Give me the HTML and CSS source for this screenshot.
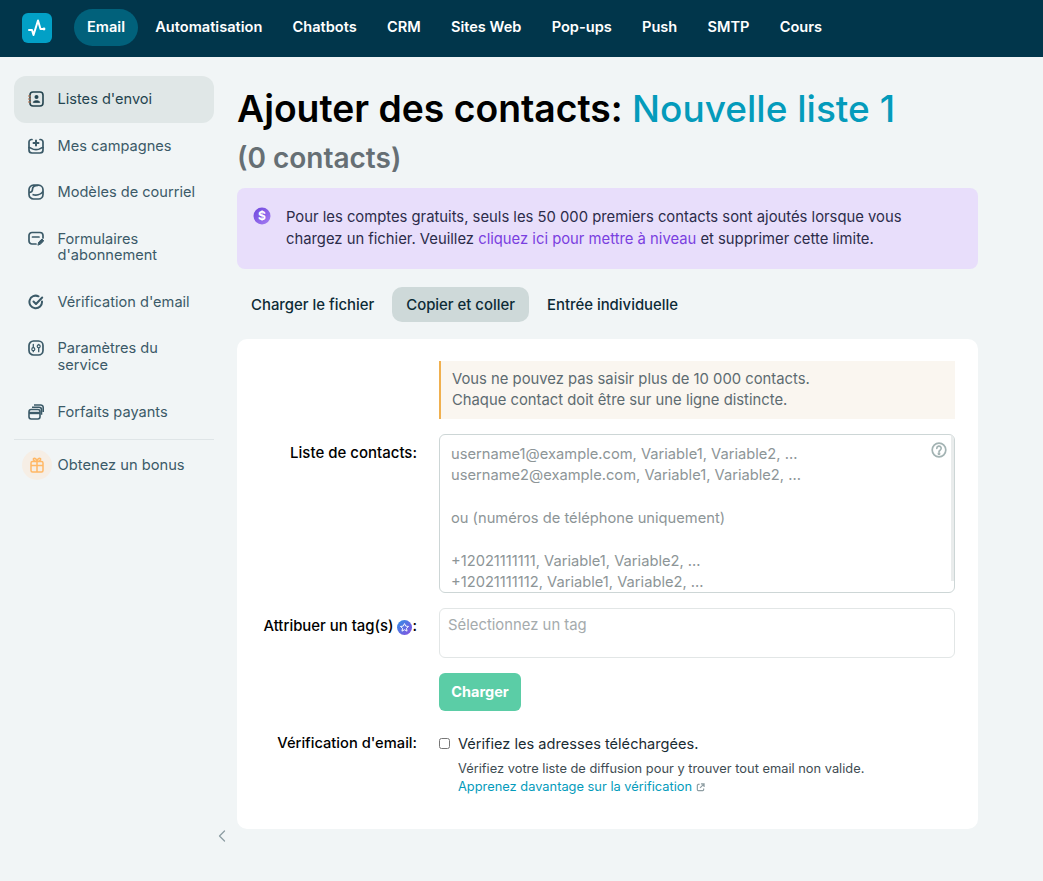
FILE: index.html
```html
<!DOCTYPE html>
<html lang="fr">
<head>
<meta charset="utf-8">
<title>Ajouter des contacts</title>
<link rel="stylesheet" href="styles.css">
</head>
<body>
<header class="topbar">
  <a class="logo"><svg width="18" height="18" viewBox="0 0 18 18" fill="none" stroke="#fff" stroke-width="2" stroke-linecap="round" stroke-linejoin="round"><path d="M1 11H4L5.500 16 10 1.500 12.500 10H16"/><circle cx="16" cy="10" r="1.400" fill="#fff" stroke="none"/></svg></a>
  <nav class="topnav">
    <a class="topnav-item is-active">Email</a>
    <a class="topnav-item">Automatisation</a>
    <a class="topnav-item">Chatbots</a>
    <a class="topnav-item">CRM</a>
    <a class="topnav-item">Sites Web</a>
    <a class="topnav-item">Pop-ups</a>
    <a class="topnav-item">Push</a>
    <a class="topnav-item">SMTP</a>
    <a class="topnav-item">Cours</a>
  </nav>
</header>
<div class="layout">
  <aside class="sidebar">
    <a class="side-item is-active">
      <svg class="side-icon" viewBox="0 0 16 16" fill="none" stroke="currentColor" stroke-width="1.600"><rect x="2" y="1" width="13" height="14" rx="3"/><circle cx="8.500" cy="6" r="2" fill="currentColor" stroke="none"/><path d="M5.300 11.300c.6-2 5.800-2 6.400 0z" fill="currentColor" stroke-width="1"/><path d="M0 5h3M0 8h3M0 11h3" stroke="#b9704a" stroke-width="1.200"/></svg>
      <span>Listes d'envoi</span>
    </a>
    <a class="side-item">
      <svg class="side-icon" viewBox="0 0 16 16" fill="none" stroke="currentColor" stroke-width="1.700" stroke-linecap="round"><path d="M4 1.500H3.500a2.500 2.500 0 0 0-2.500 2.500v8a3 3 0 0 0 3 3h8a3 3 0 0 0 3-3V4a2.500 2.500 0 0 0-2.500-2.500H12"/><path d="M1 9.500c2.500 0 2.500 2.200 7 2.200s4.500-2.200 7-2.200"/><path d="M8 2.500v5M5.500 5h5" stroke-width="2"/></svg>
      <span>Mes campagnes</span>
    </a>
    <a class="side-item">
      <svg class="side-icon" viewBox="0 0 16 16" fill="none" stroke="currentColor" stroke-width="1.700"><rect x="1" y="1.200" width="14" height="13.800" rx="4.500"/><path d="M1 8.500c2.500 0 3.500-.8 3.500-3.200C4.500 3.300 6.500 1.500 10 1.500"/><path d="M4.500 10.500c3.500 1.200 8 .5 10.500-3"/></svg>
      <span>Modèles de courriel</span>
    </a>
    <a class="side-item">
      <svg class="side-icon" viewBox="0 0 16 16" fill="none" stroke="currentColor" stroke-width="1.700" stroke-linecap="round"><path d="M8 13H4a3 3 0 0 1-3-3V4.500a3 3 0 0 1 3-3h8a3 3 0 0 1 3 3V7"/><path d="M4.500 6h6.500"/><path d="M10 13.800l.8-2.800 3.200-3 1.800 1.800-3 3z" fill="currentColor" stroke-width="1"/></svg>
      <span>Formulaires d'abonnement</span>
    </a>
    <a class="side-item">
      <svg class="side-icon" viewBox="0 0 16 16" fill="none" stroke="currentColor" stroke-width="2" stroke-linecap="round" stroke-linejoin="round"><path d="M14 7.500A6.300 6.300 0 1 1 10.500 2.300"/><path d="M5.500 7.500 8 10l6.200-6.500"/></svg>
      <span>Vérification d'email</span>
    </a>
    <a class="side-item">
      <svg class="side-icon" viewBox="0 0 16 16" fill="none" stroke="currentColor" stroke-width="1.700" stroke-linecap="round"><rect x="1" y="1" width="14" height="14" rx="4.500"/><path d="M5.300 4.300v7.400M10.700 4.300v7.400" stroke-width="1.300"/><circle cx="5.300" cy="9.200" r="1.500" fill="#f1f5f6" stroke-width="1.200"/><circle cx="10.700" cy="6.300" r="1.500" fill="#f1f5f6" stroke-width="1.200"/></svg>
      <span>Paramètres du service</span>
    </a>
    <a class="side-item">
      <svg class="side-icon" viewBox="0 0 16 16" fill="none" stroke="currentColor" stroke-width="1.600"><rect x="1" y="5.500" width="11" height="9.500" rx="2.200"/><path d="M1 9h11" stroke-width="2.400"/><path d="M4 3.300h7a2.500 2.500 0 0 1 2.500 2.500v5"/><path d="M6 1h6.500A2.500 2.500 0 0 1 15.200 3.500V8"/></svg>
      <span>Forfaits payants</span>
    </a>
    <hr class="side-rule">
    <a class="side-bonus">
      <span class="bonus-badge"><svg width="14" height="16" viewBox="0 0 14 16" fill="none" stroke="#ffb866" stroke-width="1.500" stroke-linejoin="round"><rect x="1" y="4.500" width="12" height="10.500" rx="1.500"/><path d="M1 8.500h12M7 4.500V15M7 4.500C5 4.500 3 3.500 3.500 1.500 5 .5 7 2.500 7 4.500ZM7 4.500c2 0 4-1 3.500-3C9 .5 7 2.500 7 4.500Z"/></svg></span>
      <span>Obtenez un bonus</span>
    </a>
  </aside>
  <main class="main">
    <h1 class="title">Ajouter des contacts: <span class="title-accent">Nouvelle liste 1</span></h1>
    <p class="subtitle">(0 contacts)</p>
    <div class="promo">
      <svg class="promo-icon" width="18" height="18" viewBox="0 0 18 18"><defs><linearGradient id="pg" x1="0" y1="0" x2="1" y2="1"><stop offset="0" stop-color="#6d45dd"/><stop offset="1" stop-color="#a67ff2"/></linearGradient></defs><circle cx="9" cy="9" r="8.500" fill="url(#pg)"/><text x="9" y="13" text-anchor="middle" class="promo-dollar">$</text></svg>
      <p>Pour les comptes gratuits, seuls les 50 000 premiers contacts sont ajoutés lorsque vous chargez un fichier. Veuillez <a class="promo-link">cliquez ici pour mettre à niveau</a> et supprimer cette limite.</p>
    </div>
    <div class="tabs">
      <a class="tab">Charger le fichier</a>
      <a class="tab is-active">Copier et coller</a>
      <a class="tab">Entrée individuelle</a>
    </div>
    <section class="card">
      <div class="form-grid">
        <div></div>
        <div class="notice">Vous ne pouvez pas saisir plus de 10 000 contacts.<br>Chaque contact doit être sur une ligne distincte.</div>

        <div class="label label-contacts">Liste de contacts:</div>
        <div class="textarea">
          <div class="placeholder">username1@example.com, Variable1, Variable2, ...<br>username2@example.com, Variable1, Variable2, ...<br><br>ou (numéros de téléphone uniquement)<br><br>+12021111111, Variable1, Variable2, ...<br>+12021111112, Variable1, Variable2, ...</div>
          <svg class="help" width="16" height="16" viewBox="0 0 16 16" fill="none" stroke="#a3b3b3" stroke-width="1.700"><circle cx="8" cy="8" r="6.800"/><path d="M5.800 6.300a2.200 2.200 0 1 1 3.300 1.900c-.7.400-1.100.8-1.100 1.500" stroke-linecap="round"/><circle cx="8" cy="11.800" r=".6" fill="#a3b3b3"/></svg>
          <span class="scrollbar"></span>
        </div>

        <div class="label label-tag">Attribuer un tag(s)<svg class="star-badge" width="15" height="15" viewBox="0 0 16 16"><defs><linearGradient id="sb" x1="0" y1="0" x2="1" y2="1"><stop offset="0" stop-color="#2f8fe6"/><stop offset="1" stop-color="#8a4fe0"/></linearGradient></defs><circle cx="8" cy="8" r="8" fill="url(#sb)"/><path d="M8 3.800l1.300 2.700 3 .4-2.200 2 .6 3L8 10.400l-2.700 1.500.6-3-2.200-2 3-.4z" fill="none" stroke="#fff" stroke-width="1"/></svg>:</div>
        <div class="tag-input">Sélectionnez un tag</div>

        <div></div>
        <div><button class="submit" type="button">Charger</button></div>

        <div class="label label-verify">Vérification d'email:</div>
        <div class="verify">
          <label class="check-row"><input class="check" type="checkbox"><span>Vérifiez les adresses téléchargées.</span></label>
          <p class="hint">Vérifiez votre liste de diffusion pour y trouver tout email non valide.<br><a class="hint-link">Apprenez davantage sur la vérification <svg class="ext" width="9" height="9" viewBox="0 0 10 10" fill="none" stroke="#8f9ea3" stroke-width="1.300"><path d="M4 1.500H2.500a1.500 1.500 0 0 0-1 1v5a1 1 0 0 0 1 1h5a1 1 0 0 0 1-1V6"/><path d="M5.500 1h3.500v3.500M9 1 4.500 5.500"/></svg></a></p>
        </div>
      </div>
    </section>
  </main>
</div>
<svg class="collapse" width="8" height="12" viewBox="0 0 8 12" fill="none" stroke="#8d9da3" stroke-width="1.300" stroke-linecap="round" stroke-linejoin="round"><path d="M6.500 1 1.500 6l5 5"/></svg>
</body>
</html>
```
FILE: styles.css
```css
* { box-sizing: border-box; }
html, body { margin: 0; padding: 0; }
body {
  position: relative;
  min-height: 881px;
  background: #f1f5f6;
  font-family: Inter, "Noto Sans", sans-serif;
  color: #0d2b36;
  overflow: hidden;
}
p { margin: 0; }

.topbar {
  height: 57px;
  background: #01364b;
  display: flex;
  align-items: center;
  padding: 0 0 2px 22px;
}
.logo {
  width: 30px;
  height: 30px;
  border-radius: 6px;
  background: #02a0c6;
  display: flex;
  align-items: center;
  justify-content: center;
  margin-right: 22px;
}
.topnav { display: flex; align-items: center; gap: 4.200px; }
.topnav-item {
  color: #fff;
  font-size: 14.600px;
  font-weight: 600;
  padding: 0 13px;
  height: 37px;
  line-height: 37px;
  border-radius: 19px;
}
.topnav-item.is-active { background: #01617b; }

.layout {
  display: flex;
  align-items: flex-start;
  padding: 19px 0 0 14px;
  gap: 23px;
}
.sidebar { width: 200px; flex: none; display: flex; flex-direction: column; }
.side-item {
  display: flex;
  align-items: flex-start;
  gap: 13.500px;
  padding: 15px 14px 15.100px;
  border-radius: 12px;
  font-size: 14.600px;
  line-height: 16.500px;
  color: #3b5a68;
}
.side-item.is-active { background: #e0e7e7; color: #24444f; }
.side-icon { width: 16px; height: 16px; flex: none; }
.side-rule { border: 0; border-top: 1px solid #dfe5e7; margin: 4px 0 10px; width: 100%; }
.side-bonus {
  display: flex;
  align-items: center;
  gap: 5.500px;
  padding-left: 8px;
  font-size: 14.700px;
  color: #3b5a68;
}
.bonus-badge {
  width: 30px;
  height: 30px;
  border-radius: 50%;
  background: #f6eee5;
  display: flex;
  align-items: center;
  justify-content: center;
}

.main { width: 741px; flex: none; }
.title {
  margin: 11px 0 0;
  font-size: 37.300px;
  line-height: 44px;
  font-weight: 600;
  color: #000;
}
.title-accent { color: #049bbb; font-size: 37px; font-weight: 500; }
.subtitle {
  margin-top: 8px;
  font-size: 28px;
  line-height: 38px;
  font-weight: 600;
  color: #666f74;
}
.promo {
  margin-top: 11px;
  height: 81px;
  background: #e8defb;
  border-radius: 8px;
  display: flex;
  gap: 15px;
  padding: 19px 60px 18px 16px;
  font-size: 14.800px;
  line-height: 21.500px;
  color: #2c2c4a;
}
.promo-icon { flex: none; margin: 0; }
.promo-dollar { fill: #fff; font-size: 12px; font-weight: 700; font-family: Inter, sans-serif; }
.promo-link { color: #7a3fe0; }

.tabs { display: flex; gap: 4px; margin-top: 18px; }
.tab {
  height: 35px;
  line-height: 36px;
  padding: 0 14px;
  border-radius: 10px;
  font-size: 14.900px;
  font-weight: 500;
  color: #0d2b36;
}
.tab.is-active { background: #ced9d9; }

.card {
  margin-top: 17px;
  height: 490px;
  background: #fff;
  border-radius: 10px;
  padding: 22px 23px;
}
.form-grid {
  display: grid;
  grid-template-columns: 157px 516px;
  column-gap: 22px;
  row-gap: 15px;
}
.label {
  text-align: right;
  font-size: 15px;
  font-weight: 500;
  color: #000;
  line-height: 17px;
}
.label-contacts { padding-top: 10px; }
.label-tag { padding-top: 10px; white-space: nowrap; display: flex; justify-content: flex-end; align-items: flex-start; font-size: 14.900px; }
.label-verify { padding-top: 9px; font-size: 14.700px; }
.star-badge { margin: 2px 0 0 4px; flex: none; }

.notice {
  height: 58px;
  background: #faf6f0;
  border-left: 2px solid #f0b04f;
  padding: 8px 11px;
  font-size: 14.800px;
  line-height: 20.500px;
  color: #5d6b70;
}
.textarea {
  position: relative;
  height: 159px;
  border: 1px solid #cdd6d6;
  border-radius: 6px;
  padding: 9px 11px;
  overflow: hidden;
}
.placeholder {
  font-size: 14.700px;
  line-height: 21.400px;
  color: #8d9597;
  white-space: nowrap;
}
.help { position: absolute; top: 7px; right: 7px; }
.scrollbar {
  position: absolute;
  top: 0;
  right: 0;
  width: 3px;
  height: 146px;
  background: #e9ecec;
}
.tag-input {
  height: 50px;
  border: 1px solid #e2e6e6;
  border-radius: 6px;
  padding: 6px 8px;
  font-size: 14.850px;
  line-height: 20px;
  color: #a5abad;
}
.submit {
  display: block;
  width: 82px;
  height: 38px;
  border: 0;
  border-radius: 6px;
  padding: 0 0 2px;
  background: #5bcda6;
  color: #fff;
  font-family: inherit;
  font-size: 14.500px;
  font-weight: 700;
}
.verify { padding-top: 8px; }
.check-row {
  display: flex;
  align-items: center;
  gap: 8px;
  font-size: 14.600px;
  line-height: 20px;
  color: #1a2c33;
}
.check { width: 11px; height: 11px; margin: -1px 0 0; }
.hint {
  margin-top: 6px;
  padding-left: 19px;
  font-size: 12.850px;
  line-height: 18px;
  color: #3e4c52;
}
.hint-link { color: #049bbb; }
.ext { vertical-align: -1px; }
.collapse { position: absolute; left: 218px; top: 830px; }
```
